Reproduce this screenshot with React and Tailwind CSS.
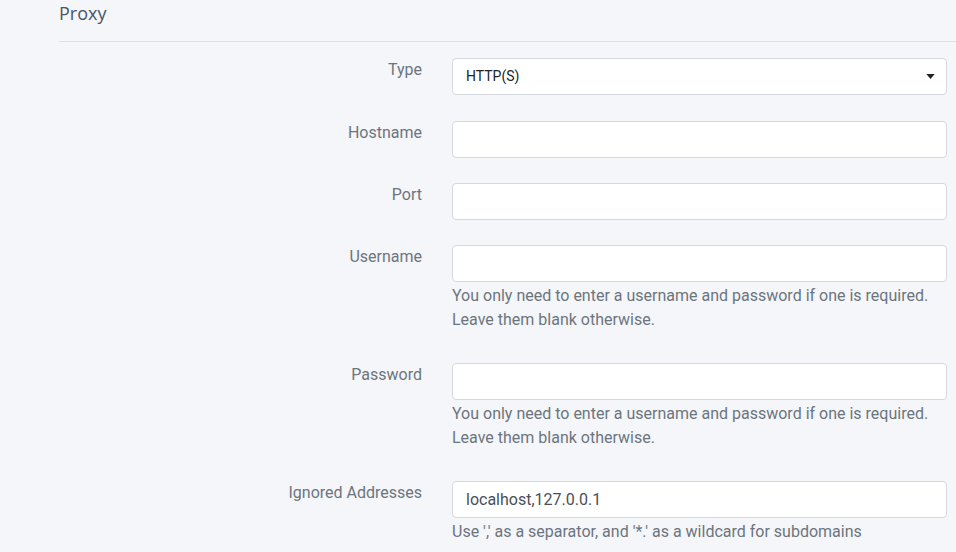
const fields = [
  { label: "Type", select: "HTTP(S)" },
  { label: "Hostname" },
  { label: "Port" },
  {
    label: "Username",
    help: ["You only need to enter a username and password if one is required.", "Leave them blank otherwise."],
  },
  {
    label: "Password",
    help: ["You only need to enter a username and password if one is required.", "Leave them blank otherwise."],
  },
  {
    label: "Ignored Addresses",
    value: "localhost,127.0.0.1",
    help: ["Use ',' as a separator, and '*.' as a wildcard for subdomains"],
  },
];

const App = () => {
  return (
    <div className="min-h-[552px] bg-[#f5f6fa] pl-[59px] overflow-hidden font-['Roboto',sans-serif]">
      <div className="h-[42px] border-b border-[#dcdfe5] pt-[1px]">
        <h2 className="text-[18px] leading-[24px] text-[#4a5565] font-['Open_Sans',sans-serif]">
          Proxy
        </h2>
      </div>
      <div className="pt-[16px] pr-[9px]">
        {fields.map((f, i) => (
          <div
            key={f.label}
            className={f.help ? "flex mb-[31px]" : i === 0 ? "flex mb-[26px]" : "flex mb-[25px]"}
          >
            <label className="w-[363px] shrink-0 text-right text-[16px] leading-[24px] text-[#6c757d]">
              {f.label}
            </label>
            <div className="flex-1 ml-[30px]">
              {f.select ? (
                <div className="h-[37px] bg-white border border-[#d5d8de] rounded-[4px] flex items-center justify-between pl-[13px] pr-[11px] text-[14px] text-[#212529]">
                  <span>{f.select}</span>
                  <svg width="9" height="5" viewBox="0 0 10 6">
                    <path d="M0 0h10L5 6z" fill="#222" />
                  </svg>
                </div>
              ) : (
                <div className="h-[37px] bg-white border border-[#d5d8de] rounded-[4px] flex items-center pl-[13px] text-[16px] text-[#495057]">
                  {f.value}
                </div>
              )}
              {f.help && (
                <div className="text-[16px] leading-[24px] text-[#6c757d] mt-[2px]">
                  {f.help.map((h) => (
                    <div key={h}>{h}</div>
                  ))}
                </div>
              )}
            </div>
          </div>
        ))}
      </div>
    </div>
  );
};

export default App;
